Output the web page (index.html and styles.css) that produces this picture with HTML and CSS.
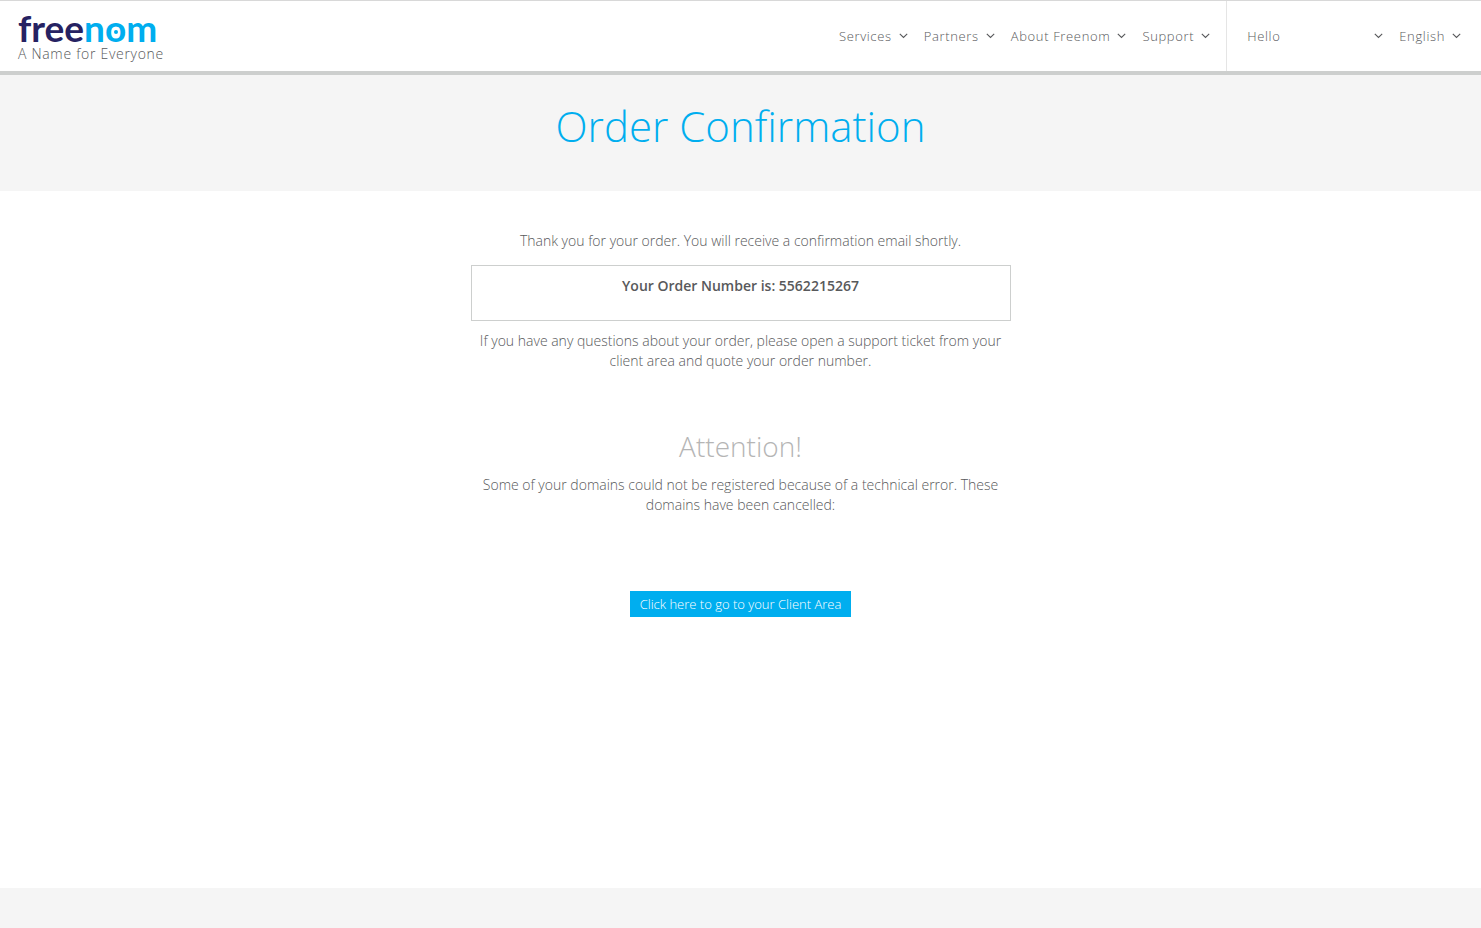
FILE: index.html
```html
<!DOCTYPE html>
<html lang="en">
<head>
    <meta charset="UTF-8">
    <meta name="viewport" content="width=device-width, initial-scale=1.0">
    <title>Order Confirmation - Freenom</title>
    <link rel="stylesheet" href="styles.css">
</head>
<body>
    <header class="navbar">
        <a class="brand" href="#">
            <span class="logo">free<span class="logo-light">n<span class="logo-target">o</span>m</span></span>
            <span class="tagline">A Name for Everyone</span>
        </a>
        <nav class="menus">
            <div class="menu main-menu">
                <a href="#">Services <svg class="caret" viewBox="0 0 9 6"><path d="M0.8 0.8 4.5 4.5 8.2 0.8"/></svg></a>
                <a href="#">Partners <svg class="caret" viewBox="0 0 9 6"><path d="M0.8 0.8 4.5 4.5 8.2 0.8"/></svg></a>
                <a href="#">About Freenom <svg class="caret" viewBox="0 0 9 6"><path d="M0.8 0.8 4.5 4.5 8.2 0.8"/></svg></a>
                <a href="#">Support <svg class="caret" viewBox="0 0 9 6"><path d="M0.8 0.8 4.5 4.5 8.2 0.8"/></svg></a>
            </div>
            <div class="menu user-menu">
                <a class="account" href="#">Hello <svg class="caret" viewBox="0 0 9 6"><path d="M0.8 0.8 4.5 4.5 8.2 0.8"/></svg></a>
                <a href="#">English <svg class="caret" viewBox="0 0 9 6"><path d="M0.8 0.8 4.5 4.5 8.2 0.8"/></svg></a>
            </div>
        </nav>
    </header>

    <section class="page-title">
        <h1>Order Confirmation</h1>
    </section>

    <main class="content">
        <p>Thank you for your order. You will receive a confirmation email shortly.</p>
        <div class="order-number">
            <strong>Your Order Number is: 5562215267</strong>
        </div>
        <p>If you have any questions about your order, please open a support ticket from your client area and quote your order number.</p>

        <h2>Attention!</h2>
        <p>Some of your domains could not be registered because of a technical error. These domains have been cancelled:</p>

        <a class="btn" href="#">Click here to go to your Client Area</a>
    </main>

    <footer class="footer"></footer>
</body>
</html>
```
FILE: styles.css
```css
:root {
    --blue: #00aeef;
    --navy: #262262;
    --text: #58595b;
    --border: #cdcfce;
    --grey: #f5f5f5;
}

* {
    box-sizing: border-box;
}

body {
    margin: 0;
    min-height: 100vh;
    display: flex;
    flex-direction: column;
    font-family: "Open Sans", sans-serif;
    font-size: 14px;
    font-weight: 300;
    line-height: 20px;
    color: var(--text);
    background: #fff;
}

a {
    color: inherit;
    text-decoration: none;
}

/* header */
.navbar {
    display: flex;
    justify-content: space-between;
    height: 75px;
    border-top: 1px solid #d8d8d8;
    border-bottom: 4px solid var(--border);
}

.brand {
    display: flex;
    flex-direction: column;
    padding: 10px 0 0 18px;
}

.logo {
    font-family: Lato, sans-serif;
    font-size: 37px;
    font-weight: 700;
    line-height: 34px;
    color: var(--navy);
}

.logo-light {
    color: var(--blue);
}

.logo-target {
    position: relative;
}

.logo-target::after {
    content: "";
    position: absolute;
    left: 50%;
    top: 60%;
    width: 4px;
    height: 4px;
    margin: -2px;
    border-radius: 50%;
    background: var(--blue);
}

.tagline {
    letter-spacing: 0.05em;
    line-height: 18px;
}

.menus,
.menu {
    display: flex;
}

.menu {
    padding: 0 8px;
    font-size: 13px;
    letter-spacing: 0.05em;
}

.menu a {
    display: flex;
    align-items: center;
    gap: 7px;
    padding: 0 8px;
}

.user-menu {
    padding: 0 12px;
    border-left: 1px solid #e5e5e5;
}

.menu .account {
    width: 152px;
    justify-content: space-between;
}

.caret {
    width: 9px;
    height: 6px;
    fill: none;
    stroke: var(--text);
    stroke-width: 1.1;
}

/* title */
.page-title {
    padding: 23px 20px 37px;
    text-align: center;
    background: var(--grey);
}

h1 {
    margin: 0;
    font-size: 42px;
    font-weight: 300;
    line-height: 56px;
    color: var(--blue);
}

/* order details */
.content {
    flex: 1;
    width: 100%;
    max-width: 540px;
    margin: 0 auto;
    padding: 40px 0;
    text-align: center;
}

.content p {
    margin: 0 0 10px;
}

.order-number {
    min-height: 56px;
    margin: 14px 0 10px;
    padding: 10px;
    border: 1px solid var(--border);
}

.order-number strong {
    font-weight: 600;
}

h2 {
    margin: 55px 0 9px;
    font-size: 28px;
    font-weight: 300;
    line-height: 40px;
    color: #b5b5b5;
}

.btn {
    display: inline-block;
    margin-top: 66px;
    padding: 3px 10px;
    font-size: 13px;
    color: #fff;
    background: var(--blue);
}

.footer {
    height: 40px;
    background: var(--grey);
}
```
